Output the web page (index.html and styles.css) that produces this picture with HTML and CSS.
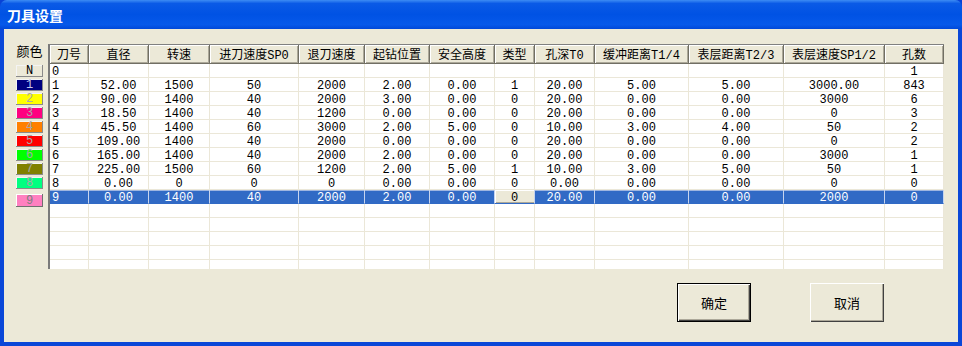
FILE: index.html
```html
<!DOCTYPE html>
<html lang="zh-CN">
<head>
  <meta charset="UTF-8" />
  <title>刀具设置</title>
  <link rel="stylesheet" href="styles.css">
</head>
<body>
  <div class="window">
    <div class="titlebar">刀具设置</div>

    <div class="client">
      <div class="main">
        <div class="colors">
          <div class="colors-label">颜色</div>
          <div class="swatch sw-n">N</div>
          <div class="swatch sw-1">1</div>
          <div class="swatch sw-2">2</div>
          <div class="swatch sw-3">3</div>
          <div class="swatch sw-4">4</div>
          <div class="swatch sw-5">5</div>
          <div class="swatch sw-6">6</div>
          <div class="swatch sw-7">7</div>
          <div class="swatch sw-8">8</div>
          <div class="swatch sw-9">9</div>
        </div>

        <div class="grid">
          <table>
            <colgroup>
              <col style="width:39px"><col style="width:60px"><col style="width:61px">
              <col style="width:89px"><col style="width:66px"><col style="width:65px">
              <col style="width:65px"><col style="width:40px"><col style="width:60px">
              <col style="width:94px"><col style="width:95px"><col style="width:101px">
              <col style="width:59px">
            </colgroup>
            <thead>
              <tr>
                <th>刀号</th><th>直径</th><th>转速</th><th>进刀速度SP0</th><th>退刀速度</th>
                <th>起钻位置</th><th>安全高度</th><th>类型</th><th>孔深T0</th>
                <th>缓冲距离T1/4</th><th>表层距离T2/3</th><th>表层速度SP1/2</th><th>孔数</th>
              </tr>
            </thead>
            <tbody>
              <tr><td>0</td><td></td><td></td><td></td><td></td><td></td><td></td><td></td><td></td><td></td><td></td><td></td><td>1</td></tr>
              <tr><td>1</td><td>52.00</td><td>1500</td><td>50</td><td>2000</td><td>2.00</td><td>0.00</td><td>1</td><td>20.00</td><td>5.00</td><td>5.00</td><td>3000.00</td><td>843</td></tr>
              <tr><td>2</td><td>90.00</td><td>1400</td><td>40</td><td>2000</td><td>3.00</td><td>0.00</td><td>0</td><td>20.00</td><td>0.00</td><td>0.00</td><td>3000</td><td>6</td></tr>
              <tr><td>3</td><td>18.50</td><td>1400</td><td>40</td><td>1200</td><td>0.00</td><td>0.00</td><td>0</td><td>20.00</td><td>0.00</td><td>0.00</td><td>0</td><td>3</td></tr>
              <tr><td>4</td><td>45.50</td><td>1400</td><td>60</td><td>3000</td><td>2.00</td><td>5.00</td><td>0</td><td>10.00</td><td>3.00</td><td>4.00</td><td>50</td><td>2</td></tr>
              <tr><td>5</td><td>109.00</td><td>1400</td><td>40</td><td>2000</td><td>0.00</td><td>0.00</td><td>0</td><td>20.00</td><td>0.00</td><td>0.00</td><td>0</td><td>2</td></tr>
              <tr><td>6</td><td>165.00</td><td>1400</td><td>40</td><td>2000</td><td>2.00</td><td>0.00</td><td>0</td><td>20.00</td><td>0.00</td><td>0.00</td><td>3000</td><td>1</td></tr>
              <tr><td>7</td><td>225.00</td><td>1500</td><td>60</td><td>1200</td><td>2.00</td><td>5.00</td><td>1</td><td>10.00</td><td>3.00</td><td>5.00</td><td>50</td><td>1</td></tr>
              <tr><td>8</td><td>0.00</td><td>0</td><td>0</td><td>0</td><td>0.00</td><td>0.00</td><td>0</td><td>0.00</td><td>0.00</td><td>0.00</td><td>0</td><td>0</td></tr>
              <tr class="selected"><td>9</td><td>0.00</td><td>1400</td><td>40</td><td>2000</td><td>2.00</td><td>0.00</td><td class="current">0</td><td>20.00</td><td>0.00</td><td>0.00</td><td>2000</td><td>0</td></tr>
              <tr><td></td><td></td><td></td><td></td><td></td><td></td><td></td><td></td><td></td><td></td><td></td><td></td><td></td></tr>
              <tr><td></td><td></td><td></td><td></td><td></td><td></td><td></td><td></td><td></td><td></td><td></td><td></td><td></td></tr>
              <tr><td></td><td></td><td></td><td></td><td></td><td></td><td></td><td></td><td></td><td></td><td></td><td></td><td></td></tr>
              <tr><td></td><td></td><td></td><td></td><td></td><td></td><td></td><td></td><td></td><td></td><td></td><td></td><td></td></tr>
              <tr><td></td><td></td><td></td><td></td><td></td><td></td><td></td><td></td><td></td><td></td><td></td><td></td><td></td></tr>
            </tbody>
          </table>
        </div>
      </div>

      <div class="actions">
        <button class="btn btn-default">确定</button>
        <button class="btn">取消</button>
      </div>
    </div>
  </div>
</body>
</html>
```

FILE: styles.css
```css
body {
  margin: 0;
  font-family: "Liberation Mono", "Noto Sans CJK SC", monospace;
  font-size: 12px;
  background: #0842d6;
}
.window {
  width: 962px;
  height: 346px;
  display: flex;
  flex-direction: column;
}
.titlebar {
  height: 29px;
  line-height: 31px;
  padding-left: 7px;
  color: #fff;
  font-family: "Noto Sans CJK SC", sans-serif;
  font-weight: 700;
  font-size: 14px;
  border-radius: 7px 7px 0 0;
  background: linear-gradient(to bottom, #3d8cf4 0%, #0a5ae6 12%, #0052e4 50%, #0659ea 85%, #0048d8 100%);
}
.client {
  flex: 1;
  background: #ece9d8;
  border: 4px solid #0a47d8;
  border-top: none;
  padding: 15px 0 0 12px;
}
.main {
  display: flex;
  gap: 5px;
}
/* Colonne des couleurs */
.colors {
  width: 27px;
  display: flex;
  flex-direction: column;
}
.colors-label {
  height: 20px;
  line-height: 14px;
  font-family: "Noto Sans CJK SC", sans-serif;
  font-size: 13px;
  text-align: center;
  color: #000;
}
.swatch {
  height: 12px;
  line-height: 13px;
  margin: 1px 0;
  text-align: center;
  color: #a8a8a8;
  box-shadow: inset -1px -1px 0 #8a8a8a, inset 1px 1px 0 #f4f4f4;
}
.sw-n { background: #ece9d8; color: #000; }
.sw-1 { background: #000080; color: #c8c8e8; }
.sw-2 { background: #ffff00; }
.sw-3 { background: #ff0080; }
.sw-4 { background: #ff8000; }
.sw-5 { background: #ff0000; }
.sw-6 { background: #00ff00; }
.sw-7 { background: #808000; }
.sw-8 { background: #00ff80; }
.sw-9 {
  background: #ff80c0;
  color: #808080;
  height: 13px;
  line-height: 14px;
  margin-top: 4px;
  box-shadow: inset -1px -1px 0 #707070, inset 1px 1px 0 #fff;
}
/* Grille */
.grid {
  width: 894px;
  height: 224px;
  overflow: hidden;
  background: #fff;
  border-top: 1px solid #808080;
  border-left: 2px solid #7a7a7a;
}
table {
  table-layout: fixed;
  width: 894px;
  border-collapse: separate;
  border-spacing: 0;
}
th {
  height: 19px;
  padding: 0;
  font-weight: 400;
  font-size: 12px;
  text-align: center;
  background: #ece9d8;
  box-sizing: border-box;
  border-right: 1px solid #716f64;
  border-bottom: 1px solid #716f64;
  box-shadow: inset 1px 1px 0 #fff, inset -1px -1px 0 #aca899;
  white-space: nowrap;
  overflow: hidden;
}
td {
  height: 14px;
  padding: 3px 0 0;
  line-height: 10px;
  text-align: center;
  box-sizing: border-box;
  border-right: 1px solid #ebe7d8;
  border-bottom: 1px solid #ebe7d8;
  white-space: nowrap;
  overflow: hidden;
}
td:first-child {
  text-align: left;
  padding-left: 2px;
}
tr.selected td {
  background: #316ac5;
  color: #fff;
  border-right-color: #c6d4ee;
  border-bottom-color: #316ac5;
  box-shadow: inset 0 1px 0 #9fb6e0;
}
tr.selected td.current {
  background: #ece9d8;
  color: #000;
  box-shadow: inset 1px 1px 0 #fff, inset 0 -1px 0 #aca899;
}
/* Boutons */
.actions {
  display: flex;
  justify-content: flex-end;
  gap: 59px;
  margin-top: 14px;
  padding-right: 74px;
}
.btn {
  width: 74px;
  height: 39px;
  background: #ece9d8;
  font-family: "Noto Sans CJK SC", sans-serif;
  font-size: 13px;
  color: #000;
  border: none;
  box-shadow: inset 1px 1px 0 #fff, inset -1px -1px 0 #404040, inset -2px -2px 0 #aca899;
}
.btn-default {
  border: 1px solid #000;
}
```
